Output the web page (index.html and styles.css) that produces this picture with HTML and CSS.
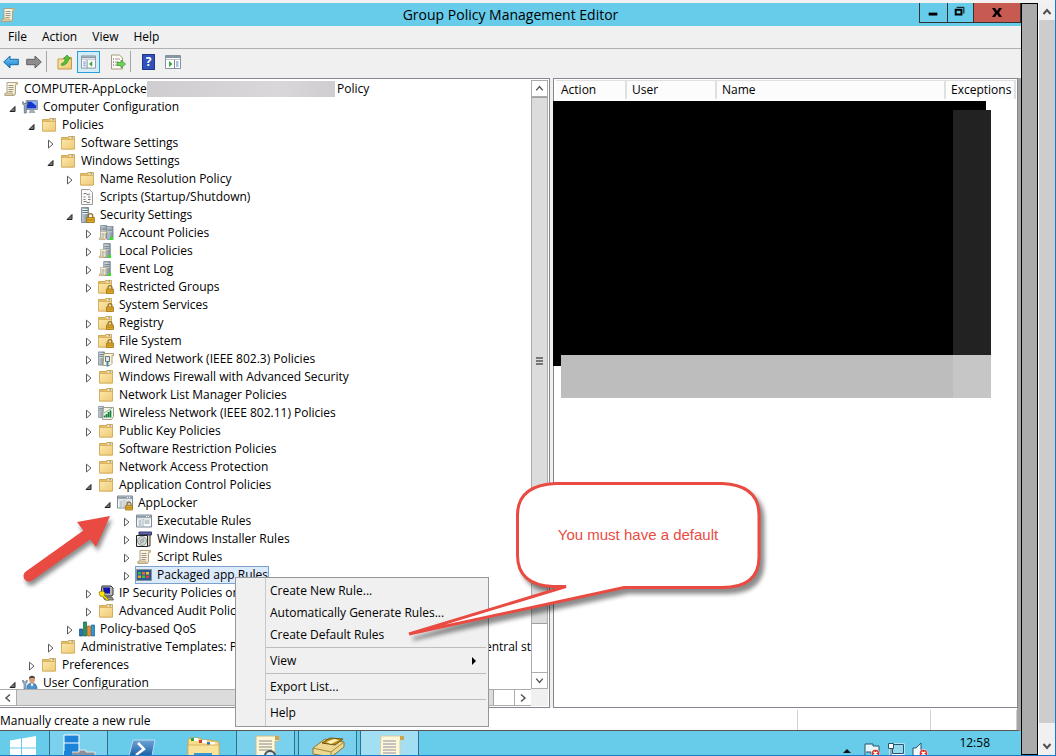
FILE: index.html
```html
<!DOCTYPE html>
<html lang="en">
<head>
<meta charset="utf-8">
<title>Group Policy Management Editor</title>
<link rel="stylesheet" href="styles.css">
</head>
<body>
<svg class="defs" aria-hidden="true">
  <defs>
    <linearGradient id="gold" x1="0" y1="0" x2="1" y2="1"><stop offset="0" stop-color="#fbe7ab"/><stop offset="1" stop-color="#efcb76"/></linearGradient>
    <linearGradient id="steel" x1="0" y1="0" x2="1" y2="0"><stop offset="0" stop-color="#c3ced6"/><stop offset="1" stop-color="#7a8b97"/></linearGradient>
    <linearGradient id="paper" x1="0" y1="0" x2="1" y2="1"><stop offset="0" stop-color="#fffdf0"/><stop offset="1" stop-color="#efe3bd"/></linearGradient>
    <linearGradient id="blue" x1="0" y1="0" x2="0" y2="1"><stop offset="0" stop-color="#7cc8f4"/><stop offset="1" stop-color="#1583d2"/></linearGradient>
    <linearGradient id="shell" x1="0" y1="0" x2="0" y2="1"><stop offset="0" stop-color="#6fa5d6"/><stop offset="1" stop-color="#1b5fa5"/></linearGradient>
    <symbol id="twist-closed" viewBox="0 0 9 10"><path d="M2.500 1.200V9L7 5.100Z" fill="#fff" stroke="#5a5a5a"/></symbol>
    <symbol id="twist-open" viewBox="0 0 9 10"><path d="M7 3.500V8.500H2Z" fill="#777" stroke="#222"/></symbol>
    <symbol id="folder" viewBox="0 0 16 16"><path d="M1.500 2.500H7.500L9 1.500H14.500V14H1.500Z" fill="#e5bf66" stroke="#c59b45" stroke-width=".8"/><path d="M9.500 2.200H14V3.500H9.500Z" fill="#fff3cf"/><path d="M11.500 2.200h1.500v1h-1.500Z" fill="#3c8bd0"/><path d="M1.500 4.500H14.500V14H1.500Z" fill="url(#gold)" stroke="#d3ac58" stroke-width=".8"/></symbol>
    <symbol id="lock" viewBox="0 0 8 9"><path d="M2 4V2.600a2 2 0 0 1 4 0V4" fill="none" stroke="#8e702c" stroke-width="1.200"/><path d="M.5 4h7v4.500h-7Z" fill="#e0a927" stroke="#9d741a" stroke-width=".8"/><path d="M1 6.200h6" stroke="#a87913" stroke-width=".7"/></symbol>
    <symbol id="locked-folder" viewBox="0 0 16 16"><use href="#folder" x="-1" width="16" height="16"/><use href="#lock" x="8" y="6" width="8" height="9"/></symbol>
    <symbol id="scroll" viewBox="0 0 16 16"><path d="M4 1.500H14.500Q15 4 12.500 4V12Q12.500 14.500 10.500 14.500H2Q1 12 4 12Z" fill="url(#paper)" stroke="#a99b78" stroke-width=".9"/><path d="M12.500 1.500H14.600Q15 4 12.500 4Z" fill="#cdb888"/><path d="M2 14.500Q1 12 3 12H9.500Q9.500 14.500 11 14.500Z" fill="#dccda3" stroke="#a99b78" stroke-width=".6"/><path d="M5.500 4.500h5M5.500 6.500h5M5.500 8.500h5M5.500 10.500h4" stroke="#918d85" stroke-width=".9"/></symbol>
    <symbol id="computer" viewBox="0 0 16 16"><path d="M4 1.500H15.500V10.500H4Z" fill="#dbe3ea" stroke="#8c99a6"/><path d="M5 2.500H14.500V9.500H5Z" fill="#1836c8"/><path d="M9 2.500H14.500V7Z" fill="#8db8ff"/><path d="M8 11h4l1.500 3H6.500Z" fill="#a5adb5"/><path d="M.8 2.500v2.800l1.500 1V14h2V6.300l1.200-1V2.500L4 4.500H2.200Z" fill="#9eb0bf" stroke="#4d6678" stroke-width=".7"/></symbol>
    <symbol id="user" viewBox="0 0 16 16"><path d="M5 15V11Q6 8 10 8T15 12V15Z" fill="#4c91c9" stroke="#2f6aa0" stroke-width=".6"/><path d="M8.500 8.500 10 12l1.500-3.500Z" fill="#fff"/><ellipse cx="10" cy="4.800" rx="2.800" ry="3.500" fill="#d49a76"/><path d="M7 4Q7 .8 10 .8T13 4L11.500 2.800H9Z" fill="#453c36"/><path d="M.8 5v2.500l1.300 1V14h1.700V8.500l1.300-1V5L3.800 7H2.200Z" fill="#b4c6d5" stroke="#46637d" stroke-width=".7"/></symbol>
    <symbol id="script" viewBox="0 0 16 16"><path d="M2.500.500h8l3 3v12h-11Z" fill="#fafafa" stroke="#9b9b9b"/><path d="M4.500 5q1.500-1.500 3 0t3.500 0M4.500 8h2M9 8h2.500M4.500 10.500h2M9 10.500h2.500M4.500 13q1.500-1.500 3 0t3.500 0" fill="none" stroke="#777"/></symbol>
    <symbol id="server" viewBox="0 0 8 16"><path d="M.5.500h7v15h-7Z" fill="url(#steel)" stroke="#6f7f8b" stroke-width=".8"/><path d="M1.500 2.500h5M1.500 4.500h5M1.500 6.500h5" stroke="#edf2f5"/><path d="M1.500 3.500h5M1.500 5.500h5" stroke="#536572" stroke-width=".8"/></symbol>
    <symbol id="secure-server" viewBox="0 0 16 16"><use href="#server" x="2" width="8" height="16"/><use href="#lock" x="7" y="6" width="9" height="10"/></symbol>
    <symbol id="server-scroll" viewBox="0 0 16 16"><use href="#server" x="5" width="8" height="15"/><path d="M10 12h3v3h-3Z" fill="#36df20"/><use href="#scroll" x="0" y="5" width="10" height="11"/></symbol>
    <symbol id="servers" viewBox="0 0 16 16"><use href="#server" x="2" width="7" height="14"/><use href="#server" x="8" y="1" width="8" height="14"/><path d="M12 12h3v3h-3Z" fill="#36df20"/><use href="#scroll" x="0" y="5" width="10" height="11"/></symbol>
    <symbol id="wired" viewBox="0 0 16 16"><use href="#server" width="7" height="15"/><path d="M6 2.500h9.500v2h-1.500v8l-2 2H5Z" fill="#fff4d8" stroke="#af9d75"/><path d="M7.500 5.500h4v5h-4Z" fill="#e3eaee" stroke="#5d7482"/><path d="M9.500 10.500v5" stroke="#328fc6" stroke-width="2"/></symbol>
    <symbol id="wireless" viewBox="0 0 16 16"><use href="#server" width="6" height="14"/><path d="M5.500 2.500h10v9l-2 3h-9Z" fill="#f5f5eb" stroke="#a29d8b"/><path d="M6.500 12.500V10.500M8.500 12.500V9M10.500 12.500V7M12.500 12.500V5.500" stroke="#15833e" stroke-width="1.700"/><path d="M6 8l8-5" stroke="#7cba93"/></symbol>
    <symbol id="window" viewBox="0 0 16 14"><path d="M.5 1h15v12H.5Z" fill="#f7f9fa" stroke="#7d8b99"/><path d="M1 1.500h14v2.300H1Z" fill="#8c99a6"/><path d="M10 2.500h4" stroke="#fff" stroke-dasharray="1 1"/><path d="M1 5h14" stroke="#ccd3d9"/><path d="M2.500 7h3M2.500 9h3M2.500 11h3M8.500 7h5M8.500 9h5" stroke="#8d9aa5"/><path d="M7 5v8" stroke="#a3adb7"/></symbol>
    <symbol id="applocker" viewBox="0 0 16 16"><use href="#window" width="16" height="14"/><use href="#lock" x="8" y="6" width="8" height="10"/></symbol>
    <symbol id="installer" viewBox="0 0 16 16"><path d="M3 1h12.500v3H3Z" fill="#5b62ab" stroke="#34396f"/><path d="M4 4h10v11H4Z" fill="#e8e4b8" stroke="#303545"/><path d="M.500 4.500h11v11H.5Z" fill="#eee" stroke="#222"/><circle cx="6" cy="10" r="4.500" fill="#c7d9ce" stroke="#7a8580" stroke-width=".7"/><path d="M6 10 8.500 6.500M6 10 3.500 13.500" stroke="#c785ce"/><circle cx="6" cy="10" r="1.300" fill="#fff" stroke="#555" stroke-width=".6"/></symbol>
    <symbol id="package" viewBox="0 0 16 14"><path d="M.5 1.500h15v11H.5Z" fill="#2a5a94" stroke="#8994a0"/><path d="M2 4h3v2.500H2Z" fill="#32b445"/><path d="M6 4h3v2.500H6Z" fill="#ee6b32"/><path d="M10 4h3v2.500h-3Z" fill="#f1c027"/><path d="M2 7.500h3V10H2Z" fill="#f1a227"/><path d="M6 7.500h3V10H6Z" fill="#4eb945"/><path d="M10 7.500h3V10h-3Z" fill="#e34135"/></symbol>
    <symbol id="ipsec" viewBox="0 0 16 16"><path d="M4 1h9l2 2v7l-2 1H5L3 8Z" fill="#b5b5b5" stroke="#333"/><path d="M5 2.500h7v6H6Z" fill="#1414a8"/><path d="M5 12h9l1.500 3H7Z" fill="#999" stroke="#333" stroke-width=".7"/><path d="m1 7 4-1 2 2-1 2 5 5-2 .5-4-4-3-.5Z" fill="#ffe500" stroke="#857800" stroke-width=".7"/></symbol>
    <symbol id="bars" viewBox="0 0 16 16"><path d="M.5 8h3v7h-3Z" fill="#1e75b6" stroke="#124a79" stroke-width=".7"/><path d="M4.500 1h3v14h-3Z" fill="#24975e" stroke="#136441" stroke-width=".7"/><path d="M8.500 5h3v10h-3Z" fill="#ee8c3a" stroke="#a95c20" stroke-width=".7"/><path d="M12.500 4h3v11h-3Z" fill="#299bd0" stroke="#176289" stroke-width=".7"/></symbol>
    <symbol id="arrow-left" viewBox="0 0 16 16"><path d="M.7 8 7 2V5.300H15.300V10.700H7V14Z"/></symbol>
    <symbol id="arrow-right" viewBox="0 0 16 16"><path d="M15.300 8 9 2V5.300H.7V10.700H9V14Z"/></symbol>
    <symbol id="up-folder" viewBox="0 0 16 16"><path d="M1 5h5l1-1.500h7.500V15H1Z" fill="url(#gold)" stroke="#c59b45"/><path d="M4 10Q8 9 8.500 5H6.500L10 1l3.500 4h-2Q11 10.500 5 11.500Z" fill="#54c53a" stroke="#2c8a20" stroke-width=".7"/></symbol>
    <symbol id="console-left" viewBox="0 0 16 14"><path d="M.5.500h15v13H.5Z" fill="#fff" stroke="#8592a0"/><path d="M1 1h14v2H1Z" fill="#8996a3"/><path d="M1 4.500h14" stroke="#b7c0c8"/><path d="M6.500 5v8.500" stroke="#77838e"/><path d="M2.500 7h2.500M2.500 9h2.500M2.500 11h2.500" stroke="#4e86be"/><path d="M12 6v6L8.500 9Z" fill="#32a743"/></symbol>
    <symbol id="console-right" viewBox="0 0 16 14"><path d="M.5.500h15v13H.5Z" fill="#fff" stroke="#8592a0"/><path d="M1 1h14v2H1Z" fill="#8996a3"/><path d="M1 4.500h14" stroke="#b7c0c8"/><path d="M9.500 5v8.500" stroke="#77838e"/><path d="M11 7h2.500M11 9h2.500M11 11h2.500" stroke="#4e86be"/><path d="M4 6v6L7.500 9Z" fill="#32a743"/></symbol>
    <symbol id="export" viewBox="0 0 16 16"><path d="M1.500 1h8l3 3v11h-11Z" fill="#fffdf1" stroke="#a49b80"/><path d="M3 5h1M3 8h1M3 11h1" stroke="#448"/><path d="M5 5h5M5 8h4M5 11h4" stroke="#999"/><path d="M7 8.500h4V6l4.500 4-4.500 4v-2.500H7Z" fill="#6fd358" stroke="#348f29" stroke-width=".7"/></symbol>
    <symbol id="badge" viewBox="0 0 10 10"><circle cx="5" cy="5" r="4.500" fill="#dc3226" stroke="#fff" stroke-width=".6"/><path d="m3 3 4 4m0-4L3 7" stroke="#fff" stroke-width="1.600"/></symbol>
  </defs>
</svg>

<div class="viewer">
  <main class="window">
    <header class="titlebar">
      <svg class="icon app-icon"><use href="#scroll"/></svg>
      <h1>Group Policy Management Editor</h1>
      <div class="caption-buttons">
        <button aria-label="Minimize"><svg viewBox="0 0 28 19"><path d="M9 11.500h9" stroke="#000" stroke-width="3"/></svg></button>
        <button aria-label="Restore"><svg viewBox="0 0 26 19"><path d="M8 7h6v5H8Z" fill="none" stroke="#000" stroke-width="2"/><path d="M9 4.500h7.500V11" fill="none" stroke="#000"/></svg></button>
        <button class="close" aria-label="Close"><svg viewBox="0 0 46 19"><path d="M18 5h3l2 3 2-3h3l-3 4.500 3 4.500h-3l-2-3-2 3h-3l3-4.500Z"/></svg></button>
      </div>
    </header>
    <nav class="menubar"><button>File</button><button>Action</button><button>View</button><button>Help</button></nav>
    <div class="toolbar">
      <button aria-label="Back"><svg class="icon back"><use href="#arrow-left"/></svg></button>
      <button aria-label="Forward"><svg class="icon forward"><use href="#arrow-right"/></svg></button>
      <span class="divider"></span>
      <button aria-label="Up one level"><svg class="icon"><use href="#up-folder"/></svg></button>
      <button class="pressed" aria-label="Show console tree"><svg class="icon"><use href="#console-left"/></svg></button>
      <button class="export" aria-label="Export list"><svg class="icon"><use href="#export"/></svg></button>
      <span class="divider"></span>
      <button class="help" aria-label="Help"><span>?</span></button>
      <button aria-label="Show action pane"><svg class="icon"><use href="#console-right"/></svg></button>
    </div>

    <div class="panes">
      <section class="tree-pane" aria-label="Console tree">
        <ul class="tree">
          <li class="root"><svg class="icon"><use href="#scroll"/></svg><span class="root-name">COMPUTER-AppLocker</span><span class="mask"></span><span>Policy</span></li>
          <li class="l1"><button aria-label="Collapse"><svg><use href="#twist-open"/></svg></button><svg class="icon"><use href="#computer"/></svg><span>Computer Configuration</span></li>
          <li class="l2"><button aria-label="Collapse"><svg><use href="#twist-open"/></svg></button><svg class="icon"><use href="#folder"/></svg><span>Policies</span></li>
          <li class="l3"><button aria-label="Expand"><svg><use href="#twist-closed"/></svg></button><svg class="icon"><use href="#folder"/></svg><span>Software Settings</span></li>
          <li class="l3"><button aria-label="Collapse"><svg><use href="#twist-open"/></svg></button><svg class="icon"><use href="#folder"/></svg><span>Windows Settings</span></li>
          <li class="l4"><button aria-label="Expand"><svg><use href="#twist-closed"/></svg></button><svg class="icon"><use href="#folder"/></svg><span>Name Resolution Policy</span></li>
          <li class="l4 leaf"><svg class="icon"><use href="#script"/></svg><span>Scripts (Startup/Shutdown)</span></li>
          <li class="l4"><button aria-label="Collapse"><svg><use href="#twist-open"/></svg></button><svg class="icon"><use href="#secure-server"/></svg><span>Security Settings</span></li>
          <li class="l5"><button aria-label="Expand"><svg><use href="#twist-closed"/></svg></button><svg class="icon"><use href="#servers"/></svg><span>Account Policies</span></li>
          <li class="l5"><button aria-label="Expand"><svg><use href="#twist-closed"/></svg></button><svg class="icon"><use href="#server-scroll"/></svg><span>Local Policies</span></li>
          <li class="l5"><button aria-label="Expand"><svg><use href="#twist-closed"/></svg></button><svg class="icon"><use href="#server-scroll"/></svg><span>Event Log</span></li>
          <li class="l5"><button aria-label="Expand"><svg><use href="#twist-closed"/></svg></button><svg class="icon"><use href="#locked-folder"/></svg><span>Restricted Groups</span></li>
          <li class="l5 leaf"><svg class="icon"><use href="#locked-folder"/></svg><span>System Services</span></li>
          <li class="l5"><button aria-label="Expand"><svg><use href="#twist-closed"/></svg></button><svg class="icon"><use href="#locked-folder"/></svg><span>Registry</span></li>
          <li class="l5"><button aria-label="Expand"><svg><use href="#twist-closed"/></svg></button><svg class="icon"><use href="#locked-folder"/></svg><span>File System</span></li>
          <li class="l5"><button aria-label="Expand"><svg><use href="#twist-closed"/></svg></button><svg class="icon"><use href="#wired"/></svg><span>Wired Network (IEEE 802.3) Policies</span></li>
          <li class="l5"><button aria-label="Expand"><svg><use href="#twist-closed"/></svg></button><svg class="icon"><use href="#folder"/></svg><span>Windows Firewall with Advanced Security</span></li>
          <li class="l5 leaf"><svg class="icon"><use href="#folder"/></svg><span>Network List Manager Policies</span></li>
          <li class="l5"><button aria-label="Expand"><svg><use href="#twist-closed"/></svg></button><svg class="icon"><use href="#wireless"/></svg><span>Wireless Network (IEEE 802.11) Policies</span></li>
          <li class="l5"><button aria-label="Expand"><svg><use href="#twist-closed"/></svg></button><svg class="icon"><use href="#folder"/></svg><span>Public Key Policies</span></li>
          <li class="l5 leaf"><svg class="icon"><use href="#folder"/></svg><span>Software Restriction Policies</span></li>
          <li class="l5"><button aria-label="Expand"><svg><use href="#twist-closed"/></svg></button><svg class="icon"><use href="#folder"/></svg><span>Network Access Protection</span></li>
          <li class="l5"><button aria-label="Collapse"><svg><use href="#twist-open"/></svg></button><svg class="icon"><use href="#folder"/></svg><span>Application Control Policies</span></li>
          <li class="l6"><button aria-label="Collapse"><svg><use href="#twist-open"/></svg></button><svg class="icon"><use href="#applocker"/></svg><span>AppLocker</span></li>
          <li class="l7"><button aria-label="Expand"><svg><use href="#twist-closed"/></svg></button><svg class="icon"><use href="#window"/></svg><span>Executable Rules</span></li>
          <li class="l7"><button aria-label="Expand"><svg><use href="#twist-closed"/></svg></button><svg class="icon"><use href="#installer"/></svg><span>Windows Installer Rules</span></li>
          <li class="l7"><button aria-label="Expand"><svg><use href="#twist-closed"/></svg></button><svg class="icon"><use href="#scroll"/></svg><span>Script Rules</span></li>
          <li class="l7"><button aria-label="Expand"><svg><use href="#twist-closed"/></svg></button><div class="selected"><svg class="icon"><use href="#package"/></svg><span>Packaged app Rules</span></div></li>
          <li class="l5"><button aria-label="Expand"><svg><use href="#twist-closed"/></svg></button><svg class="icon"><use href="#ipsec"/></svg><span>IP Security Policies on</span></li>
          <li class="l5"><button aria-label="Expand"><svg><use href="#twist-closed"/></svg></button><svg class="icon"><use href="#folder"/></svg><span>Advanced Audit Policy</span></li>
          <li class="l4"><button aria-label="Expand"><svg><use href="#twist-closed"/></svg></button><svg class="icon"><use href="#bars"/></svg><span>Policy-based QoS</span></li>
          <li class="l3"><button aria-label="Expand"><svg><use href="#twist-closed"/></svg></button><svg class="icon"><use href="#folder"/></svg><span>Administrative Templates: Po</span><span class="row-end">entral st</span></li>
          <li class="l2"><button aria-label="Expand"><svg><use href="#twist-closed"/></svg></button><svg class="icon"><use href="#folder"/></svg><span>Preferences</span></li>
          <li class="l1"><button aria-label="Collapse"><svg><use href="#twist-open"/></svg></button><svg class="icon"><use href="#user"/></svg><span>User Configuration</span></li>
        </ul>
        <div class="vscroll">
          <button aria-label="Scroll up"><svg viewBox="0 0 16 16"><path d="m4.500 10 3.500-4 3.500 4"/></svg></button>
          <div class="thumb"><i></i><i></i><i></i></div>
          <div class="space"></div>
          <button aria-label="Scroll down"><svg viewBox="0 0 16 16"><path d="m4.500 6 3.500 4 3.500-4"/></svg></button>
        </div>
        <div class="hscroll">
          <button aria-label="Scroll left"><svg viewBox="0 0 16 16"><path d="m10 4.500-4 3.500 4 3.500"/></svg></button>
          <div class="thumb"></div>
          <div class="space"></div>
          <button aria-label="Scroll right"><svg viewBox="0 0 16 16"><path d="m6 4.500 4 3.500-4 3.500"/></svg></button>
        </div>
        <div class="corner"></div>
      </section>

      <section class="list-pane" aria-label="Rules">
        <table>
          <colgroup><col class="c-action"><col class="c-user"><col class="c-name"><col class="c-exceptions"></colgroup>
          <thead><tr><th>Action</th><th>User</th><th>Name</th><th>Exceptions</th></tr></thead>
        </table>
        <div class="redaction"><div class="black"></div><div class="dark"></div><div class="grey"></div><div class="light"></div></div>
      </section>
    </div>

    <footer class="statusbar"><span class="message">Manually create a new rule</span><span class="cell"></span><span class="cell"></span></footer>

    <div class="taskbar">
      <button class="start" aria-label="Start"><svg viewBox="0 0 48 24"><path d="M10 9.500l11-2v9H10ZM22 7.500l14-2.500V16.500H22ZM10 17.500h11v8H10ZM22 17.500h14v8H22Z" fill="#fff"/></svg></button>
      <button class="open" aria-label="Server Manager"><svg viewBox="0 0 58 24"><path d="M14 4h15v22H14Z" fill="#1c84d8" stroke="#fff"/><path d="M14 12h15" stroke="#fff"/><path d="M19 25h26v-4H36v-2h-7v2H19Z" fill="#8c9299" stroke="#dfe6ec"/><path d="M14 20h8v6h-8Z" fill="#1c84d8"/></svg></button>
      <button aria-label="PowerShell"><svg viewBox="0 0 64 24"><path d="M25 9h22l-3 16H21Z" fill="url(#shell)" stroke="#b9dcf4"/><path d="m30 12 6 6-8 6" fill="none" stroke="#fff" stroke-width="2.500"/></svg></button>
      <button aria-label="File Explorer"><svg viewBox="0 0 64 24"><path d="M16 9l2-2h10l2 2h8l2 1h5l2 2v14H16Z" fill="#f8dc88" stroke="#c9a24a"/><path d="M19 7h7v3h-7Z" fill="#fff"/><path d="M19 7h3v3h-3Z" fill="#24a148"/><path d="M27 9h8v3h-8Z" fill="#fff"/><path d="M27 9h3v3h-3Z" fill="#d33b2f"/><path d="M35 11h8v3h-8Z" fill="#fff"/><path d="M35 11h3v3h-3Z" fill="#2c7fc7"/><path d="M16 14h31v12H16Z" fill="#f9e39a" stroke="#d8b55d"/><path d="M22 22h18v4H22Z" fill="#3d93cd"/></svg></button>
      <button class="open" aria-label="Group Policy Management"><svg viewBox="0 0 58 24"><path d="M19 5h23v5h-4v16H19Z" fill="#fdf7da" stroke="#c9b98a"/><path d="M38 5h4v4h-4Z" fill="#c8a550"/><path d="M22 10h13M22 13h13M22 16h13M22 19h13" stroke="#888"/><circle cx="33" cy="25" r="5" fill="#d6e7ef" stroke="#4a4f55" stroke-width="2"/></svg></button>
      <button class="open" aria-label="Storage tool"><svg viewBox="0 0 58 24"><path d="M14 17 26 8l19 3v5L32 26l-18-3Z" fill="#ecd890" stroke="#8f7730"/><path d="m14 17 18 4 13-10M32 21v5" fill="none" stroke="#a48939"/><path d="m23 12 8-5 13 1-8 6Z" fill="#b98c15" stroke="#6d5514"/><path d="m27 11 8-3 5 1-8 4Z" fill="#fff2b5"/></svg></button>
      <button class="open active" aria-label="Group Policy Management Editor"><svg viewBox="0 0 58 24"><path d="M20 5h22v4h-3v17H19Z" fill="#fdf7da" stroke="#d9cda2"/><path d="M39 5h4v4h-4Z" fill="#c8a550"/><path d="M22 10h13M22 13h13M22 16h13M22 19h13M22 22h13" stroke="#8f8ca0"/></svg></button>
      <div class="tray">
        <svg viewBox="0 0 100 24"><path d="m2 22 4-4 4 4Z" fill="#111"/><path d="M24 25V13h8v2h6v8h-8v-2h-5" fill="#e8f7fd" stroke="#26546a"/><use href="#badge" x="30" y="18" width="9" height="9"/><path d="M50 14h12v9H50ZM54 25h6" fill="#cfeefa" stroke="#fff" stroke-width="3"/><path d="M51.500 13.500h11v9h-11ZM54 25h6" fill="#93d8ee" stroke="#26546a"/><path d="M47.500 12.500h5v5h-5ZM50 17.500V25" fill="#fff" stroke="#26546a"/><path d="M72 17h3l5-5v13h-8Z" fill="#f4fbfe" stroke="#26546a"/><use href="#badge" x="78" y="18" width="9" height="9"/></svg>
        <time>12:58</time>
      </div>
    </div>

    <div class="context-menu" role="menu">
      <button role="menuitem">Create New Rule...</button>
      <button role="menuitem">Automatically Generate Rules...</button>
      <button role="menuitem">Create Default Rules</button>
      <hr>
      <button role="menuitem">View<svg viewBox="0 0 6 8"><path d="M1 0v8l4-4Z"/></svg></button>
      <hr>
      <button role="menuitem">Export List...</button>
      <hr>
      <button role="menuitem">Help</button>
    </div>

    <svg class="pointer" viewBox="0 0 100 80" aria-hidden="true"><path d="M9 58 68 16" stroke="#e94b43" stroke-width="11" stroke-linecap="round"/><path d="M90 -2 57 4 76 29Z" fill="#e94b43"/></svg>
    <div class="callout">
      <svg viewBox="0 0 370 170" aria-hidden="true"><path d="M153 4.500H319Q356 6 356 36V78Q356 108.500 319 108.500H221L6 155 163 107.500H150Q114.500 106 114.500 76V36Q114.500 6 153 4.500Z" fill="#fff" stroke="#e94b43" stroke-width="3"/></svg>
      <p>You must have a default</p>
    </div>
  </main>
  <div class="gutter"></div>
  <div class="outer-scroll">
    <button aria-label="Scroll up"><svg viewBox="0 0 16 18"><path d="m4.500 11 3.500-4 3.500 4"/></svg></button>
    <div class="outer-thumb"></div>
    <button aria-label="Scroll down"><svg viewBox="0 0 16 18"><path d="m4.500 7 3.500 4 3.500-4"/></svg></button>
  </div>
</div>
</body>
</html>
```
FILE: styles.css
```css
* { box-sizing: border-box; }
body { margin: 0; font-family: "Open Sans", "Noto Sans", sans-serif; font-size: 12px; line-height: 18px; color: #000; }
button { margin: 0; padding: 0; border: 0; background: none; font: inherit; color: inherit; }
svg { display: block; }
.defs { position: absolute; width: 0; height: 0; }
.icon { width: 16px; height: 16px; flex: none; }

.viewer { display: flex; height: 100vh; padding-top: 3px; background: #f2f2f2; border-right: 1px solid #1979ca; border-bottom: 1px solid #1979ca; overflow: hidden; }
.window { position: relative; flex: 1; min-width: 0; display: flex; flex-direction: column; background: #f0f0f0; overflow: hidden; }
.gutter { width: 17px; border: 1px solid #000; background: #ababab; }
.outer-scroll { width: 17px; display: flex; flex-direction: column; background: #f0f0f0; border-left: 1px solid #fff; }
.outer-scroll button { height: 17px; }
.outer-scroll button:last-child { height: 32px; padding-top: 14px; }
.outer-scroll path { fill: none; stroke: #505050; stroke-width: 2; }
.outer-thumb { flex: 1; background: #cdcdcd; }

.titlebar { display: flex; height: 23px; background: #67cbea; }
.app-icon { margin: 4px 0 0; }
.titlebar h1 { flex: 1; margin: 0; padding-left: 86px; font-size: 14px; font-weight: 400; line-height: 23px; text-align: center; }
.caption-buttons { display: flex; height: 20px; border: 1px solid #333; border-top: 0; }
.caption-buttons button { width: 28px; border-right: 1px solid #333; }
.caption-buttons button:nth-child(2) { width: 26px; }
.caption-buttons .close { width: 46px; background: #c75b52; border: 0; }

.menubar { display: flex; gap: 15px; height: 23px; padding-left: 8px; line-height: 22px; border-bottom: 1px solid #b0b0b0; }
.toolbar { display: flex; align-items: center; height: 29px; padding: 0 3px 4px; gap: 7px; }
.toolbar .back { fill: url(#blue); stroke: #176ba5; }
.toolbar .forward { fill: #8d8d8d; stroke: #606060; }
.divider { width: 1px; height: 21px; margin: 0 3px 0 -3px; background: #a5a5a5; }
.toolbar .pressed { width: 23px; height: 22px; margin: 0 3px 0 -3px; padding: 3px; border: 1px solid #26a0da; background: #d4ebf8; }
.toolbar .pressed .icon { width: 15px; height: 14px; }
.toolbar .help { width: 13px; height: 16px; margin: 0 3px 0 1px; background: #2f51b8; border: 1px solid #1d3788; color: #fff; font-weight: 700; line-height: 14px; }

.panes { flex: 1; min-height: 0; display: grid; grid-template-columns: 550fr 465fr; gap: 3px; padding-right: 3px; background: linear-gradient(to right, #f0f0f0 98%, #a5a5a5 98%); }
.tree-pane { display: grid; grid-template-columns: minmax(0, 1fr) 17px; grid-template-rows: minmax(0, 1fr) 17px; padding: 1px 1px 1px 0; border: solid #828790; border-width: 1px 1px 1px 0; background: #fff; min-width: 0; min-height: 0; }
.tree { margin: 0; padding: 0 0 0 3px; list-style: none; overflow: hidden; white-space: nowrap; }
.tree li { display: flex; align-items: center; height: 18px; }
.tree .icon { margin-right: 5px; }
.tree button { display: flex; width: 19px; height: 18px; padding: 5px 0 0 5px; flex: none; }
.tree button svg { width: 9px; height: 10px; }
.tree .leaf::before { content: ""; width: 19px; flex: none; }
.l2 { padding-left: 19px; }
.l3 { padding-left: 38px; }
.l4 { padding-left: 57px; }
.l5 { padding-left: 76px; }
.l6 { padding-left: 95px; }
.l7 { padding-left: 114px; }
.root-name { width: 123px; overflow: hidden; }
.mask { width: 188px; height: 16px; margin-right: 2px; background: linear-gradient(to right, #cfcdd0, #d9d7da 70%, #cfcdd0); }
.selected { display: flex; align-items: center; height: 18px; margin-left: -1px; border: 1px solid #7da2ce; background: #dcebfc; }
.row-end { margin-left: auto; }

.vscroll, .hscroll { display: flex; background: #fff; }
.vscroll { flex-direction: column; border: solid #acacac; border-width: 0 1px; }
.hscroll { border: solid #acacac; border-width: 1px 0; }
.panes .thumb { background: #dcdcdc; border: 1px solid #a0a0a0; }
.vscroll .thumb { flex: 527; border-width: 1px 0; display: flex; flex-direction: column; align-items: center; justify-content: center; gap: 1px; }
.vscroll .thumb i { width: 7px; height: 2px; background: #777; }
.vscroll .space { flex: 48; }
.vscroll button { height: 17px; border: solid #acacac; border-width: 1px 0; }
.hscroll button { width: 17px; border-right: 1px solid #acacac; }
.hscroll button:last-child { border-left: 1px solid #acacac; border-right: 0; }
.hscroll .thumb { flex: 477; border-width: 0 1px 0 0; }
.hscroll .space { flex: 20; }
.vscroll path, .hscroll path { fill: none; stroke: #555; stroke-width: 1.5; }
.corner { background: #f0f0f0; }

.list-pane { padding: 1px 1px 0 2px; border: 1px solid #828790; background: #fff; min-width: 0; }
.list-pane table { width: 100%; height: 18px; border-collapse: collapse; table-layout: fixed; background: #fcfcfc; }
.list-pane th { padding: 0 0 0 5px; font-weight: 400; text-align: left; border: solid #e0e0e0; border-width: 1px 2px 0 0; }
.c-action { width: 70px; }
.c-user { width: 90px; }
.c-exceptions { width: 70px; }
.redaction { display: grid; grid-template-columns: 8px 1fr 33px 5px; grid-template-rows: 9px 245px 11px 32px; margin: 2px 25px 0 -3px; }
.black { grid-area: 1 / 1 / 4 / 4; background: #000; }
.dark { grid-area: 2 / 3 / 3 / 5; background: #222; }
.grey { grid-area: 3 / 2 / 5 / 5; background: #bdbdbd; }
.light { grid-area: 3 / 3 / 5 / 5; background: #c6c6c6; }

.statusbar { display: flex; height: 23px; padding-top: 2px; background: #fff; border-bottom: 1px solid #555; border-right: 4px solid #a5a5a5; line-height: 21px; }
.message { flex: 1; }
.cell { width: 133px; border-left: 1px solid #d0d0d0; }
.cell:last-child { width: 87px; border-right: 1px solid #d0d0d0; }

.taskbar { display: flex; height: 24px; background: #67cbea; overflow: hidden; }
.taskbar button { width: 64px; height: 24px; }
.taskbar button svg { height: 24px; }
.taskbar .start { width: 49px; }
.taskbar .open { width: 59px; margin-right: 3px; border: solid #2f6f8a; border-width: 0 1px; background: #79d1ed; }
.taskbar .start + .open { margin-right: 0; }
.taskbar .active { background: #a3dff3; }
.tray { display: flex; margin-left: auto; }
.tray svg { width: 100px; height: 24px; }
.tray time { margin: 3px 31px 0 18px; }

.context-menu { position: absolute; left: 235px; top: 574px; width: 254px; padding: 2px 2px 2px 0; border: 1px solid #979797; background: linear-gradient(to right, transparent 29px, #c8c8c8 29px, #c8c8c8 30px, transparent 30px) #f0f0f0; }
.context-menu button { display: flex; align-items: center; justify-content: space-between; width: 100%; height: 22px; padding: 0 9px 0 34px; }
.context-menu svg { width: 6px; height: 8px; }
.context-menu hr { height: 1px; margin: 1px 0 2px 30px; border: 0; background: #bdbdbd; }

.pointer { position: absolute; left: 20px; top: 515px; width: 100px; height: 80px; overflow: visible; filter: drop-shadow(2px 4px 2px rgb(0 0 0 / 45%)); }
.callout { position: absolute; left: 403px; top: 476px; width: 370px; height: 170px; }
.callout svg { filter: drop-shadow(4px 5px 2px rgb(0 0 0 / 45%)); }
.callout p { position: absolute; left: 115px; right: 15px; top: 45px; margin: 0; color: #e94b43; font: 15px/22px "Liberation Sans", Arial, sans-serif; text-align: center; }
```
